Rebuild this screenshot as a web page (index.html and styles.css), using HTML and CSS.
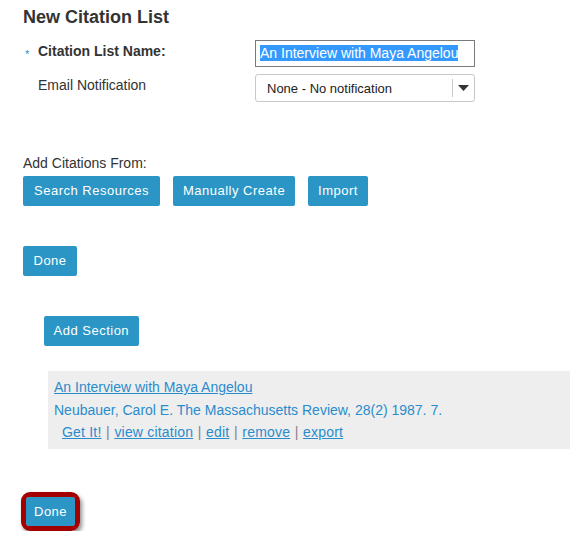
FILE: index.html
```html
<!DOCTYPE html>
<html>
<head>
<meta charset="utf-8">
<link rel="stylesheet" href="styles.css">
</head>
<body>
<div class="page">
  <h1 class="title">New Citation List</h1>
  <div class="form">
    <div class="label req"><span class="star">*</span><b>Citation List Name:</b></div>
    <div class="field"><div class="input"><span class="sel">An Interview with Maya Angelou</span></div></div>
    <div class="label">Email Notification</div>
    <div class="field">
      <div class="select">
        <span class="select-text">None - No notification</span>
        <span class="select-arrow"><svg width="11" height="6" viewBox="0 0 11 6"><path d="M0 0H11L5.5 6Z" fill="#333"/></svg></span>
      </div>
    </div>
  </div>
  <div class="add-from">Add Citations From:</div>
  <div class="btn-row">
    <span class="btn">Search Resources</span>
    <span class="btn">Manually Create</span>
    <span class="btn">Import</span>
  </div>
  <div class="done-row"><span class="btn">Done</span></div>
  <div class="section-row"><span class="btn">Add Section</span></div>
  <div class="citation">
    <div class="cite-line"><a class="link" href="#">An Interview with Maya Angelou</a></div>
    <div class="cite-line cite-text">Neubauer, Carol E. The Massachusetts Review, 28(2) 1987. 7.</div>
    <div class="cite-line cite-actions"><a class="link" href="#">Get It!</a><span class="sep">|</span><a class="link" href="#">view citation</a><span class="sep">|</span><a class="link" href="#">edit</a><span class="sep">|</span><a class="link" href="#">remove</a><span class="sep">|</span><a class="link" href="#">export</a></div>
  </div>
  <div class="final-row"><span class="ring"><span class="btn btn-small">Done</span></span></div>
</div>
</body>
</html>
```

FILE: styles.css
```css
html, body {
  margin: 0;
  padding: 0;
  background: #fff;
}
body {
  font-family: "Liberation Sans", Arial, sans-serif;
  font-size: 14px;
  color: #333;
}
.page {
  padding: 7px 0 0 23px;
}
.title {
  margin: 0;
  font-size: 18px;
  line-height: 21px;
  font-weight: bold;
  color: #333;
}
.form {
  display: grid;
  grid-template-columns: 232px 220px;
  row-gap: 7px;
  margin-top: 12px;
}
.label {
  padding: 3px 0 0 15px;
  line-height: 16px;
  position: relative;
}
.label b {
  font-weight: bold;
}
.star {
  position: absolute;
  left: 2px;
  top: 6px;
  color: #2a8fc8;
  font-size: 11px;
}
.input {
  height: 27px;
  box-sizing: border-box;
  border: 1px solid #7a7a7a;
  padding: 4px 0 0 4px;
  font-size: 14px;
  line-height: 17px;
}
.sel {
  background: #3399ff;
  color: #fff;
}
.select {
  height: 28px;
  box-sizing: border-box;
  border: 1px solid #c8c8c8;
  border-radius: 3px;
  display: flex;
  align-items: center;
  font-size: 13px;
}
.select-text {
  flex: 1;
  padding-left: 11px;
  color: #222;
}
.select-arrow {
  width: 21px;
  height: 18px;
  border-left: 1px solid #c8c8c8;
  display: flex;
  align-items: center;
  justify-content: center;
}
.add-from {
  margin-top: 53px;
  line-height: 16px;
}
.btn-row {
  display: flex;
  gap: 13px;
  margin-top: 5px;
}
.btn {
  display: inline-block;
  height: 30px;
  line-height: 30px;
  padding: 0 10px;
  background: #2b95c5;
  color: #fff;
  font-size: 13px;
  letter-spacing: 0.5px;
  border-radius: 2px;
  box-sizing: border-box;
}
.btn-row .btn:first-child {
  padding: 0 11px;
}
.done-row {
  margin-top: 40px;
  height: 30px;
}
.done-row .btn {
  padding: 0 10.5px;
}
.section-row {
  margin-top: 40px;
  margin-left: 21px;
  height: 30px;
}
.section-row .btn {
  padding: 0 9.5px;
}
.citation {
  margin-top: 25px;
  margin-left: 25px;
  background: #eeeeee;
  padding: 5px 0 6px 6px;
  height: 78px;
  box-sizing: border-box;
}
.cite-line {
  line-height: 22.5px;
  color: #2a8ccc;
}
.link {
  color: #2a8ccc;
  text-decoration: underline;
}
.cite-actions {
  padding-left: 8px;
  letter-spacing: 0.2px;
}
.sep {
  color: #8a7c8c;
  margin: 0 4.5px;
}
.final-row {
  margin-top: 43px;
  margin-left: -2px;
}
.ring {
  display: inline-block;
  border: 5px solid #a30000;
  border-radius: 9px;
  box-shadow: 2px 3px 4px rgba(0, 0, 0, 0.45);
  line-height: 0;
}
.btn-small {
  height: 29px;
  line-height: 29px;
  padding: 0 8px;
  border-radius: 3px;
}
```
